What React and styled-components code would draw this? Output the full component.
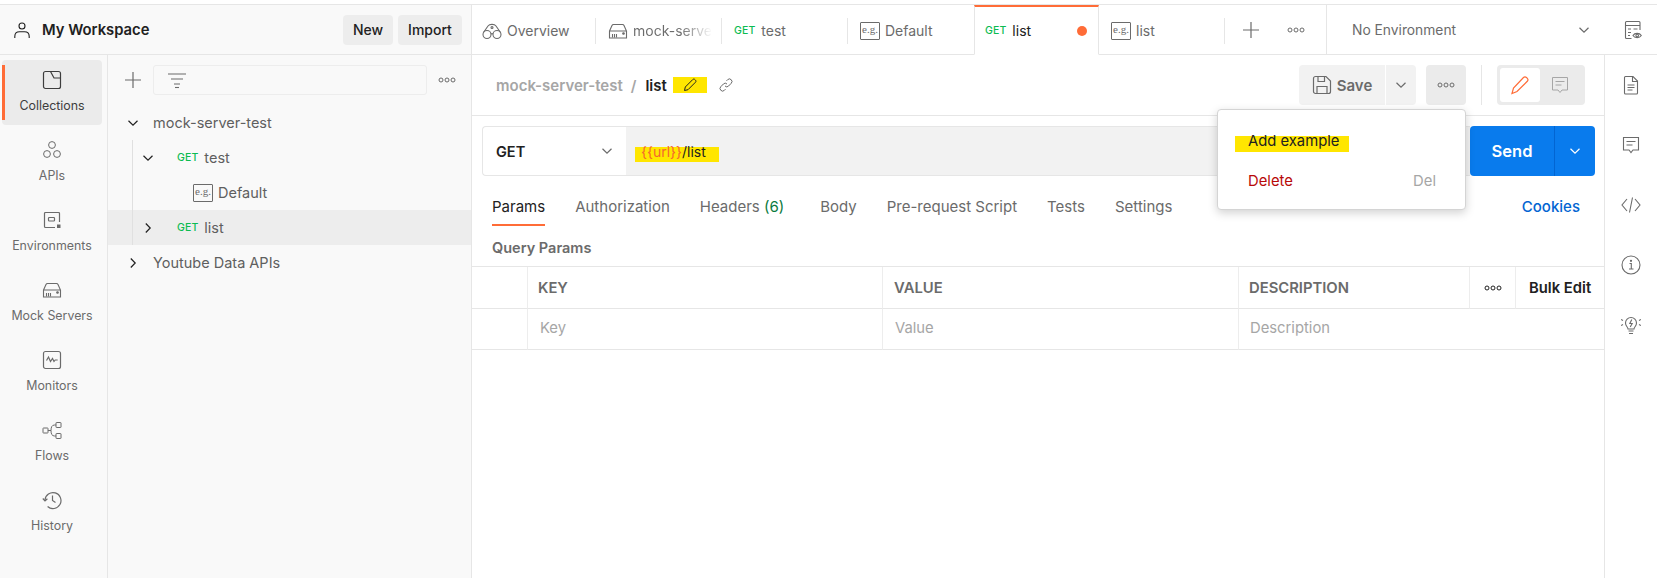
import React from 'react';
import styled, { createGlobalStyle } from 'styled-components';

const GlobalStyle = createGlobalStyle`
  html, body {
    margin: 0;
    padding: 0;
    background: #fff;
  }
  body {
    font-family: Inter, "Noto Sans", sans-serif;
    font-size: 14px;
    color: #6b6b6b;
  }
  * {
    box-sizing: border-box;
  }
`;

const Page = styled.div`
  width: 1657px;
  height: 578px;
  padding-top: 4px;
  overflow: hidden;
`;

const Frame = styled.div`
  display: flex;
  height: 574px;
  border-top: 1px solid #e6e6e6;
`;

// left side
const LeftPanel = styled.aside`
  width: 472px;
  flex: none;
  display: flex;
  flex-direction: column;
  background: #f9f9f9;
  border-right: 1px solid #e6e6e6;
`;

const WorkspaceBar = styled.header`
  height: 50px;
  flex: none;
  display: flex;
  align-items: center;
  padding: 0 9px 0 14px;
  border-bottom: 1px solid #e6e6e6;
`;

const WorkspaceName = styled.div`
  flex: 1;
  margin-left: 12px;
  font-size: 14.8px;
  font-weight: 600;
  color: #212121;
`;

const HeadButton = styled.button`
  height: 30px;
  width: ${(p) => p.$w}px;
  margin-left: 5px;
  padding: 0;
  border: 0;
  border-radius: 4px;
  background: #ededed;
  color: #212121;
  font: 500 14px Inter, sans-serif;
`;

const PanelBody = styled.div`
  flex: 1;
  display: flex;
  min-height: 0;
`;

const NavRail = styled.nav`
  width: 108px;
  flex: none;
  padding: 5px 5px 0 2px;
  display: flex;
  flex-direction: column;
  gap: 5px;
  border-right: 1px solid #e6e6e6;
`;

const NavItem = styled.div`
  position: relative;
  height: 65px;
  padding-top: 10px;
  display: flex;
  flex-direction: column;
  align-items: center;
  border-radius: 4px;
  background: ${(p) => (p.$active ? '#ebebeb' : 'transparent')};
  color: ${(p) => (p.$active ? '#3d3d3d' : '#6b6b6b')};

  &::before {
    content: ${(p) => (p.$active ? '""' : 'none')};
    position: absolute;
    left: 0;
    top: 5px;
    bottom: 5px;
    width: 3px;
    background: #ff6c37;
  }
`;

const NavLabel = styled.span`
  margin-top: 8px;
  font-size: 12.4px;
  line-height: 16px;
  white-space: nowrap;
`;

const TreePane = styled.div`
  flex: 1;
  min-width: 0;
`;

const TreeTools = styled.div`
  height: 50px;
  display: flex;
  align-items: center;
  padding-left: 17px;
`;

const FilterBox = styled.div`
  width: 274px;
  height: 30px;
  flex: none;
  margin-left: 12px;
  margin-right: 11px;
  padding-left: 14px;
  display: flex;
  align-items: center;
  border: 1px solid #ededed;
  border-radius: 3px;
`;

const TreeList = styled.div`
  position: relative;
`;

const TreeGuide = styled.div`
  position: absolute;
  left: 24px;
  top: 35px;
  height: 105px;
  width: 1px;
  background: #e0e0e0;
`;

const TreeRow = styled.div`
  height: 35px;
  display: flex;
  align-items: center;
  padding-left: ${(p) => p.$indent}px;
  background: ${(p) => (p.$selected ? '#ededed' : 'transparent')};
  font-size: 14.5px;
  color: #5f5f5f;
`;

const RowChevron = styled.span`
  width: 16px;
  flex: none;
  display: flex;
  justify-content: center;
  margin-right: ${(p) => p.$gap}px;
`;

const MethodTag = styled.span`
  margin-right: 6px;
  font-size: 10.5px;
  font-weight: 500;
  color: #0cbb52;
  letter-spacing: 0.1px;
`;

const ExampleBadge = styled.span`
  width: 20px;
  height: 18px;
  flex: none;
  display: flex;
  align-items: center;
  justify-content: center;
  border: 1px solid #6b6b6b;
  border-radius: 1px;
  font-family: "Liberation Serif", serif;
  font-size: 11px;
  line-height: 1;
  padding-bottom: 2px;
  color: #6b6b6b;
`;

// right side
const MainColumn = styled.main`
  flex: 1;
  min-width: 0;
  display: flex;
  flex-direction: column;
`;

const TabBar = styled.div`
  height: 50px;
  flex: none;
  display: flex;
`;

const Tab = styled.div`
  position: relative;
  width: ${(p) => p.$w || 126}px;
  flex: none;
  display: flex;
  align-items: center;
  padding-left: ${(p) => p.$pad || 12}px;
  color: ${(p) => (p.$active ? '#212121' : '#6b6b6b')};
  font-size: 14px;
  white-space: nowrap;
  border-top: 2px solid ${(p) => (p.$active ? '#ff6c37' : 'transparent')};
  border-bottom: 1px solid ${(p) => (p.$active ? 'transparent' : '#e6e6e6')};
  border-left: ${(p) => (p.$active ? '1px solid #e6e6e6' : '0')};
  border-right: ${(p) => (p.$active ? '1px solid #e6e6e6' : '0')};

  &::after {
    content: ${(p) => (p.$divider ? '""' : 'none')};
    position: absolute;
    right: 0;
    top: 11px;
    height: 26px;
    width: 1px;
    background: #e6e6e6;
  }
`;

const FadedText = styled.span`
  margin-left: 5px;
  background: linear-gradient(90deg, #6b6b6b 60%, #ffffff 100%);
  -webkit-background-clip: text;
  background-clip: text;
  color: transparent;
`;

const TabLabel = styled.span`
  margin-left: ${(p) => p.$gap || 5}px;
`;

const UnsavedDot = styled.span`
  position: absolute;
  right: 11px;
  top: 19px;
  width: 10px;
  height: 10px;
  border-radius: 50%;
  background: #ff6c37;
`;

const TabTools = styled.div`
  width: 101px;
  flex: none;
  display: flex;
  align-items: center;
  padding-left: 18px;
  gap: 28px;
  border-bottom: 1px solid #e6e6e6;
`;

const EnvSelect = styled.div`
  flex: 1;
  display: flex;
  align-items: center;
  padding: 0 14px 0 25px;
  border-left: 1px solid #e6e6e6;
  border-bottom: 1px solid #e6e6e6;
  font-size: 13.8px;
`;

const EnvName = styled.span`
  flex: 1;
`;

const EnvIcon = styled.span`
  margin-left: 33px;
  display: flex;
`;

const ContentRow = styled.div`
  flex: 1;
  display: flex;
  min-height: 0;
`;

const Workspace = styled.section`
  position: relative;
  width: 1132px;
  flex: none;
`;

const TitleBar = styled.div`
  height: 61px;
  display: flex;
  align-items: center;
  padding: 0 19px 0 24px;
  border-bottom: 1px solid #e6e6e6;
`;

const Crumb = styled.span`
  font-size: 15px;
  font-weight: 600;
  color: ${(p) => (p.$strong ? '#212121' : '#a6a6a6')};
  margin-right: ${(p) => p.$gap || 0}px;
`;

const PencilMark = styled.span`
  width: 34px;
  height: 16px;
  margin-left: 6px;
  display: flex;
  align-items: center;
  justify-content: center;
  background: #ffe600;
`;

const LinkMark = styled.span`
  margin-left: 12px;
  display: flex;
  flex: 1;
`;

const SaveButton = styled.div`
  width: 86px;
  height: 40px;
  display: flex;
  align-items: center;
  justify-content: center;
  gap: 5px;
  background: #f2f2f2;
  border-radius: 4px 0 0 4px;
  font-size: 15px;
  font-weight: 600;
  color: #6b6b6b;
`;

const SaveCaret = styled.div`
  width: 30px;
  height: 40px;
  margin-left: 1px;
  display: flex;
  align-items: center;
  justify-content: center;
  background: #f2f2f2;
  border-radius: 0 4px 4px 0;
`;

const DotsButton = styled.div`
  width: 40px;
  height: 40px;
  margin-left: 10px;
  display: flex;
  align-items: center;
  justify-content: center;
  background: #ebebeb;
  border-radius: 4px;
`;

const ToolDivider = styled.div`
  width: 1px;
  height: 40px;
  margin: 0 15px;
  background: #e6e6e6;
`;

const ModeToggle = styled.div`
  width: 88px;
  height: 40px;
  padding: 3px;
  display: flex;
  background: #ebebeb;
  border-radius: 4px;
`;

const ModeOption = styled.div`
  width: 40px;
  display: flex;
  align-items: center;
  justify-content: center;
  background: ${(p) => (p.$active ? '#fff' : 'transparent')};
  border-radius: 3px;
`;

const RequestBar = styled.div`
  display: flex;
  height: 50px;
  margin: 10px 9px 0 10px;
`;

const MethodSelect = styled.div`
  width: 144px;
  flex: none;
  display: flex;
  align-items: center;
  justify-content: space-between;
  padding: 0 13px 0 13px;
  border: 1px solid #e6e6e6;
  border-right: 0;
  border-radius: 4px 0 0 4px;
  font-size: 14.5px;
  font-weight: 600;
  color: #212121;
`;

const UrlBox = styled.div`
  flex: 1;
  display: flex;
  align-items: center;
  padding-left: 15px;
  background: #f2f2f2;
  border-top: 1px solid #e6e6e6;
  border-bottom: 1px solid #e6e6e6;
  font-size: 14px;
  color: #212121;
`;

const Highlighted = styled.span`
  position: relative;
  z-index: 0;

  &::before {
    content: '';
    position: absolute;
    z-index: -1;
    left: ${(p) => p.$l}px;
    right: ${(p) => p.$r}px;
    top: ${(p) => p.$t}px;
    bottom: ${(p) => p.$b}px;
    background: #ffe600;
  }
`;

const UrlVar = styled.span`
  color: #f4662f;
`;

const SendButton = styled.div`
  width: 125px;
  flex: none;
  display: flex;
  background: #097bed;
  border-radius: 4px;
  color: #fff;
  font-size: 16.5px;
  font-weight: 600;
`;

const SendLabel = styled.div`
  width: 85px;
  display: flex;
  align-items: center;
  justify-content: center;
  border-right: 1px solid #0265d2;
`;

const SendCaret = styled.div`
  flex: 1;
  display: flex;
  align-items: center;
  justify-content: center;
`;

const RequestTabs = styled.div`
  height: 60px;
  display: flex;
  align-items: center;
  padding: 0 24px 0 20px;
  font-size: 15px;
`;

const RequestTab = styled.div`
  position: relative;
  margin-right: ${(p) => p.$gap}px;
  color: ${(p) => (p.$active ? '#212121' : '#6b6b6b')};
  white-space: nowrap;

  &::after {
    content: ${(p) => (p.$active ? '""' : 'none')};
    position: absolute;
    left: 0;
    right: 0;
    bottom: -10px;
    height: 2px;
    background: #ff6c37;
  }
`;

const TabCount = styled.span`
  color: #0a7a3e;
`;

const CookiesLink = styled.div`
  margin-left: auto;
  color: #0265d2;
  font-weight: 500;
`;

const SectionTitle = styled.div`
  height: 30px;
  display: flex;
  align-items: center;
  padding: 0 0 8px 20px;
  font-size: 14.5px;
  font-weight: 600;
  color: #6b6b6b;
`;

const ParamsTable = styled.div`
  display: grid;
  grid-template-columns: 56px 355px 356px 231px 46px 88px;
  grid-template-rows: 42px 41px;
  border-top: 1px solid #e6e6e6;
`;

const Cell = styled.div`
  grid-column: ${(p) => p.$span || 'auto'};
  display: flex;
  align-items: center;
  justify-content: ${(p) => (p.$center ? 'center' : 'flex-start')};
  padding-left: ${(p) => (p.$center ? 0 : p.$pad || 11)}px;
  border-bottom: 1px solid #e6e6e6;
  border-right: ${(p) => (p.$last ? '0' : '1px solid #ededed')};
  font-size: 14.8px;
`;

const HeadCell = styled(Cell)`
  font-weight: 600;
  color: #6b6b6b;
`;

const BulkCell = styled(Cell)`
  font-weight: 600;
  color: #212121;
`;

const PlaceholderCell = styled(Cell)`
  padding-bottom: 2px;
  color: #a6a6a6;
`;

const DropMenu = styled.div`
  position: absolute;
  left: 745px;
  top: 54px;
  width: 249px;
  height: 101px;
  padding-top: 11px;
  background: #fff;
  border: 1px solid #d4d4d4;
  border-radius: 4px;
  box-shadow: 0 3px 10px rgba(0, 0, 0, 0.18);
  font-size: 14.8px;
  z-index: 2;
`;

const MenuRow = styled.div`
  height: 40px;
  display: flex;
  align-items: center;
  justify-content: space-between;
  padding: 0 29px 0 30px;
  color: ${(p) => (p.$danger ? '#b80a0a' : '#212121')};
`;

const MenuHint = styled.span`
  color: #a6a6a6;
`;

const ContextRail = styled.div`
  flex: 1;
  display: flex;
  flex-direction: column;
  align-items: center;
  gap: 40px;
  padding-top: 20px;
  border-left: 1px solid #e6e6e6;
`;

const Ic = ({ s = 20, c = '#6b6b6b', sw = 1, vb, children }) => (
  <svg width={s} height={s} viewBox={vb || `0 0 ${s} ${s}`} fill="none" stroke={c} strokeWidth={sw} style={{ flex: 'none', display: 'block' }}>
    {children}
  </svg>
);

const Chevron = ({ dir = 'down', c = '#212121', s = 12 }) => (
  <svg width={s} height={s} viewBox="0 0 12 12" fill="none" stroke={c} strokeWidth="1.2" style={{ flex: 'none', display: 'block' }}>
    {dir === 'down' ? <path d="M1.5 3.8 6 8.2l4.5-4.4" /> : <path d="M3.8 1.5 8.2 6l-4.4 4.5" />}
  </svg>
);

const Dots = ({ c = '#6b6b6b' }) => (
  <svg width="18" height="6" viewBox="0 0 18 6" fill="none" stroke={c} style={{ flex: 'none', display: 'block' }}>
    <circle cx="3" cy="3" r="2" />
    <circle cx="9" cy="3" r="2" />
    <circle cx="15" cy="3" r="2" />
  </svg>
);

const Plus = () => (
  <Ic s={16} sw={1.2}>
    <path d="M8 0v16M0 8h16" />
  </Ic>
);

const ServerIcon = () => (
  <Ic sw={1.1}>
    <path d="M1.5 10 4 4.500c.3-.7.8-1 1.500-1h9c.7 0 1.200.3 1.500 1l2.500 5.500v7h-17zM1.500 10h17" />
    <path d="M4.500 16.500v-3.500M6.500 16.500v-3.500M8.500 16.500v-3.500" />
    <circle cx="15.500" cy="12.500" r=".8" fill="#6b6b6b" />
  </Ic>
);

const navItems = [
  {
    label: 'Collections',
    active: true,
    icon: (
      <Ic c="#3d3d3d" sw={1.2}>
        <rect x="1.500" y="1.500" width="17" height="17" rx="2" />
        <path d="M8.500 1.500 12 8h6.500" />
      </Ic>
    ),
  },
  {
    label: 'APIs',
    icon: (
      <Ic>
        <circle cx="10" cy="5" r="3.400" />
        <circle cx="5" cy="14" r="3.400" />
        <circle cx="15" cy="14" r="3.400" />
      </Ic>
    ),
  },
  {
    label: 'Environments',
    icon: (
      <Ic sw={1.2}>
        <path d="M17.500 12V3.500c0-.6-.4-1-1-1h-13c-.6 0-1 .4-1 1v13c0 .6.4 1 1 1H13" />
        <rect x="6.500" y="7.500" width="6" height="3.500" rx=".8" />
        <rect x="15" y="14.500" width="3.500" height="3.500" fill="#6b6b6b" stroke="none" />
      </Ic>
    ),
  },
  { label: 'Mock Servers', icon: <ServerIcon /> },
  {
    label: 'Monitors',
    icon: (
      <Ic sw={1.2}>
        <rect x="1.500" y="1.500" width="17" height="17" rx="2" />
        <path d="m4.500 10.500 2-3.500 2 4.500 2-3 1.500 3 1.200-1.500h2.500" />
      </Ic>
    ),
  },
  {
    label: 'Flows',
    icon: (
      <Ic>
        <rect x="1" y="8" width="5" height="5" rx=".5" />
        <rect x="14" y="2.500" width="5" height="5" rx=".5" />
        <rect x="14" y="13.500" width="5" height="5" rx=".5" />
        <path d="M6 10.500h3M14 5h-1.500C10 5 9 7 9 10.500S10 16 12.500 16H14" />
      </Ic>
    ),
  },
  {
    label: 'History',
    icon: (
      <Ic sw={1.2}>
        <path d="M3 10a8 8 0 1 1 2.600 6.500" />
        <path d="M.8 8.500 3 11l2.400-2.300" />
        <path d="M10.500 5.500v5l3 2" />
      </Ic>
    ),
  },
];

export default function App() {
  return (
    <Page>
      <GlobalStyle />
      <Frame>
        <LeftPanel>
          <WorkspaceBar>
            <Ic s={16} c="#212121" vb="0 0 16 16" sw={1.1}>
              <circle cx="8" cy="4" r="3" />
              <path d="M.8 16v-1.500C.8 11.500 3 9.800 5.500 9.800h5c2.500 0 4.700 1.700 4.700 4.700V16" />
            </Ic>
            <WorkspaceName>My Workspace</WorkspaceName>
            <HeadButton $w={50}>New</HeadButton>
            <HeadButton $w={64}>Import</HeadButton>
          </WorkspaceBar>
          <PanelBody>
            <NavRail>
              {navItems.map((item) => (
                <NavItem key={item.label} $active={item.active}>
                  {item.icon}
                  <NavLabel>{item.label}</NavLabel>
                </NavItem>
              ))}
            </NavRail>
            <TreePane>
              <TreeTools>
                <Plus />
                <FilterBox>
                  <Ic s={18} vb="0 0 18 18" sw={1.1}>
                    <path d="M0 3h18M3 8h12M6 13h6" />
                    <path d="M7 16.500h4" />
                  </Ic>
                </FilterBox>
                <Dots />
              </TreeTools>
              <TreeList>
                <TreeGuide />
                <TreeRow $indent={17}>
                  <RowChevron $gap={12}>
                    <Chevron />
                  </RowChevron>
                  mock-server-test
                </TreeRow>
                <TreeRow $indent={32}>
                  <RowChevron $gap={21}>
                    <Chevron />
                  </RowChevron>
                  <MethodTag>GET</MethodTag>
                  test
                </TreeRow>
                <TreeRow $indent={85}>
                  <ExampleBadge>e.g.</ExampleBadge>
                  <TabLabel>Default</TabLabel>
                </TreeRow>
                <TreeRow $indent={32} $selected>
                  <RowChevron $gap={21}>
                    <Chevron dir="right" />
                  </RowChevron>
                  <MethodTag>GET</MethodTag>
                  list
                </TreeRow>
                <TreeRow $indent={17}>
                  <RowChevron $gap={12}>
                    <Chevron dir="right" />
                  </RowChevron>
                  Youtube Data APIs
                </TreeRow>
              </TreeList>
            </TreePane>
          </PanelBody>
        </LeftPanel>

        <MainColumn>
          <TabBar>
            <Tab $w={124} $pad={10} $divider>
              <Ic s={20} vb="0 0 20 20" sw={1.1}>
                <circle cx="5" cy="13.500" r="4" />
                <circle cx="15" cy="13.500" r="4" />
                <path d="M1.500 11.500 6 5c1.500-2.200 6.500-2.200 8 0l4.500 6.500M9 13c.7-.5 1.300-.5 2 0" />
                <circle cx="10" cy="6.500" r="1" />
              </Ic>
              <TabLabel>Overview</TabLabel>
            </Tab>
            <Tab $divider>
              <ServerIcon />
              <FadedText>mock-serve</FadedText>
            </Tab>
            <Tab $divider>
              <MethodTag>GET</MethodTag>
              test
            </Tab>
            <Tab>
              <ExampleBadge>e.g.</ExampleBadge>
              <TabLabel>Default</TabLabel>
            </Tab>
            <Tab $active $w={125} $pad={10}>
              <MethodTag>GET</MethodTag>
              list
              <UnsavedDot />
            </Tab>
            <Tab $divider>
              <ExampleBadge>e.g.</ExampleBadge>
              <TabLabel>list</TabLabel>
            </Tab>
            <TabTools>
              <Plus />
              <Dots />
            </TabTools>
            <EnvSelect>
              <EnvName>No Environment</EnvName>
              <Chevron c="#6b6b6b" />
              <EnvIcon>
                <Ic sw={1.1}>
                  <path d="M8.500 18.500h-5c-.6 0-1-.4-1-1v-15c0-.6.4-1 1-1h12.500c.6 0 1 .4 1 1V10" />
                  <path d="M2.500 5.500h14.500M5 9h3M10.500 9h4M5 12.500h3M5 15.500h2" />
                  <path d="M10 15.500c1.700-2.800 6.500-2.800 8.300 0-1.800 2.800-6.600 2.800-8.300 0z" />
                  <circle cx="14.200" cy="15.500" r="1.300" />
                </Ic>
              </EnvIcon>
            </EnvSelect>
          </TabBar>

          <ContentRow>
            <Workspace>
              <TitleBar>
                <Crumb $gap={8}>mock-server-test</Crumb>
                <Crumb $gap={9}>/</Crumb>
                <Crumb $strong>list</Crumb>
                <PencilMark>
                  <Ic s={14} c="#212121" vb="0 0 14 14">
                    <path d="M1.500 12.500 2.300 9 9.800 1.500c.6-.6 1.500-.6 2 0l.7.700c.6.600.6 1.400 0 2L5 11.700z" />
                  </Ic>
                </PencilMark>
                <LinkMark>
                  <Ic s={14} vb="0 0 14 14">
                    <path d="M6 8a2.500 2.500 0 0 0 3.600 0l2.600-2.700a2.500 2.500 0 0 0-3.600-3.600L7.500 2.800" />
                    <path d="M8 6a2.500 2.500 0 0 0-3.600 0L1.800 8.700a2.500 2.500 0 0 0 3.600 3.600l1.100-1.100" />
                  </Ic>
                </LinkMark>
                <SaveButton>
                  <Ic sw={1.2}>
                    <path d="M1.500 3.500c0-1.100.9-2 2-2h10.500l4.500 4.500v10.500c0 1.100-.9 2-2 2h-13c-1.100 0-2-.9-2-2z" />
                    <path d="M6 1.500v5h6.500v-5M5 18.500v-7h10v7" />
                  </Ic>
                  Save
                </SaveButton>
                <SaveCaret>
                  <Chevron c="#6b6b6b" />
                </SaveCaret>
                <DotsButton>
                  <Dots />
                </DotsButton>
                <ToolDivider />
                <ModeToggle>
                  <ModeOption $active>
                    <Ic c="#ff6c37" sw={1.2}>
                      <path d="M2 18.500 3.500 13 13.500 2.500c.9-.9 2-.9 3 0l.8.8c.9 1 .9 2 0 3L7 16.500z" />
                    </Ic>
                  </ModeOption>
                  <ModeOption>
                    <Ic c="#a6a6a6">
                      <path d="M2.500 2.500h15v12.500h-5.500L10 17.500 8 15H2.500z" />
                      <path d="M5.500 6.500h9M5.500 10h6" />
                    </Ic>
                  </ModeOption>
                </ModeToggle>
              </TitleBar>

              <RequestBar>
                <MethodSelect>
                  GET
                  <Chevron c="#6b6b6b" />
                </MethodSelect>
                <UrlBox>
                  <Highlighted $l={-6} $r={-13} $t={4} $b={-2}>
                    <UrlVar>{'{{url}}'}</UrlVar>/list
                  </Highlighted>
                </UrlBox>
                <SendButton>
                  <SendLabel>Send</SendLabel>
                  <SendCaret>
                    <Chevron c="#fff" />
                  </SendCaret>
                </SendButton>
              </RequestBar>

              <RequestTabs>
                <RequestTab $active $gap={30}>Params</RequestTab>
                <RequestTab $gap={30}>Authorization</RequestTab>
                <RequestTab $gap={36}>
                  Headers <TabCount>(6)</TabCount>
                </RequestTab>
                <RequestTab $gap={30}>Body</RequestTab>
                <RequestTab $gap={30}>Pre-request Script</RequestTab>
                <RequestTab $gap={30}>Tests</RequestTab>
                <RequestTab $gap={0}>Settings</RequestTab>
                <CookiesLink>Cookies</CookiesLink>
              </RequestTabs>

              <SectionTitle>Query Params</SectionTitle>

              <ParamsTable>
                <Cell />
                <HeadCell $pad={10}>KEY</HeadCell>
                <HeadCell>VALUE</HeadCell>
                <HeadCell $pad={10}>DESCRIPTION</HeadCell>
                <Cell $center>
                  <Dots c="#212121" />
                </Cell>
                <BulkCell $last $pad={13}>Bulk Edit</BulkCell>
                <Cell />
                <PlaceholderCell $pad={12}>Key</PlaceholderCell>
                <PlaceholderCell $pad={12}>Value</PlaceholderCell>
                <PlaceholderCell $last $span="span 3" $pad={11}>Description</PlaceholderCell>
              </ParamsTable>

              <DropMenu>
                <MenuRow>
                  <Highlighted $l={-13} $r={-10} $t={4} $b={-2}>Add example</Highlighted>
                </MenuRow>
                <MenuRow $danger>
                  Delete
                  <MenuHint>Del</MenuHint>
                </MenuRow>
              </DropMenu>
            </Workspace>

            <ContextRail>
              <Ic sw={1.1}>
                <path d="M3.500 2.500c0-.6.4-1 1-1H12l4.500 4.500v12c0 .6-.4 1-1 1h-11c-.6 0-1-.4-1-1z" />
                <path d="M11.500 1.500v5h5M6.500 10h7M6.500 12.500h7M6.500 15h5" />
              </Ic>
              <Ic sw={1.1}>
                <path d="M2.500 2.500h15v12.500h-5.500L10 17.500 8 15H2.500z" />
                <path d="M5.500 6.500h9M5.500 10h6" />
              </Ic>
              <Ic sw={1.1}>
                <path d="M6 4 1 10l5 6M14 4l5 6-5 6M11.500 2.500l-3 15" />
              </Ic>
              <Ic sw={1.1}>
                <circle cx="10" cy="10" r="9" />
                <path d="M8.500 8.500H10.300v5M8 14h4.500" />
                <circle cx="10" cy="5.800" r=".6" fill="#6b6b6b" />
              </Ic>
              <Ic sw={1.1}>
                <path d="M7 14c0-2-2.500-2.800-2.500-6a5.500 5.500 0 0 1 11 0c0 3.200-2.500 4-2.500 6z" />
                <path d="M10.800 4.500 8.800 8.500h2.400l-2 3.500M7.500 16h5M8 18.500h4M0 4.500l2 1M0 10.500l2-1M20 4.500l-2 1M20 10.500l-2-1" />
              </Ic>
            </ContextRail>
          </ContentRow>
        </MainColumn>
      </Frame>
    </Page>
  );
}
